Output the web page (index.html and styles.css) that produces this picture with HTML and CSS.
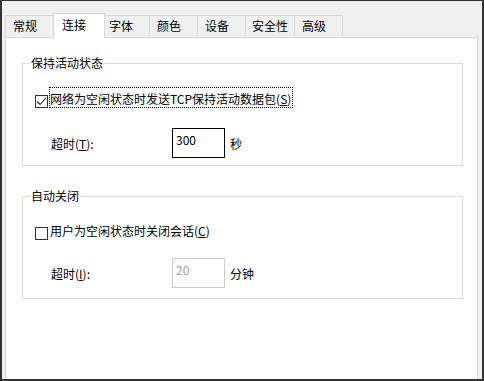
FILE: index.html
```html
<!DOCTYPE html>
<html lang="zh-CN">
<head>
    <meta charset="UTF-8">
    <meta name="viewport" content="width=device-width, initial-scale=1.0">
    <title>连接</title>
    <link rel="stylesheet" href="styles.css">
</head>
<body>
    <div class="window">
        <!-- Tab strip -->
        <div class="tabs">
            <div class="tab">常规</div>
            <div class="tab active">连接</div>
            <div class="tab">字体</div>
            <div class="tab">颜色</div>
            <div class="tab">设备</div>
            <div class="tab wide">安全性</div>
            <div class="tab">高级</div>
        </div>

        <div class="panel">
            <!-- Keep-alive group -->
            <fieldset class="group">
                <legend>保持活动状态</legend>
                <div class="group-body keepalive">
                    <div class="check-row">
                        <span class="checkbox">
                            <svg width="11" height="11" viewBox="0 0 11 11"><polyline points="1,5.5 4,8.5 10,2" fill="none" stroke="#222" stroke-width="1.1"/></svg>
                        </span>
                        <span class="check-label focused">网络为空闲状态时发送TCP保持活动数据包(<u>S</u>)</span>
                    </div>
                    <div class="field-row">
                        <span class="field-label">超时(<u>T</u>):</span>
                        <div class="edit">300</div>
                        <span class="unit">秒</span>
                    </div>
                </div>
            </fieldset>

            <!-- Auto close group -->
            <fieldset class="group second">
                <legend>自动关闭</legend>
                <div class="group-body autoclose">
                    <div class="check-row">
                        <span class="checkbox"></span>
                        <span class="check-label">用户为空闲状态时关闭会话(<u>C</u>)</span>
                    </div>
                    <div class="field-row">
                        <span class="field-label">超时(<u>I</u>):</span>
                        <div class="edit disabled">20</div>
                        <span class="unit">分钟</span>
                    </div>
                </div>
            </fieldset>
        </div>
    </div>
</body>
</html>
```

FILE: styles.css
```css
body {
    margin: 0;
    font-family: "Noto Sans CJK SC", "Noto Sans", sans-serif;
    font-size: 12px;
    color: #000;
    background: #f0f0f0;
}
.window {
    width: 484px;
    height: 381px;
    box-sizing: border-box;
    border: 2px solid #333;
    border-top-width: 1px;
    background: #f0f0f0;
    padding: 12px 4px 0 3px;
    display: flex;
    flex-direction: column;
}
.tabs {
    display: flex;
    align-items: flex-end;
    height: 24px;
}
.tab {
    box-sizing: border-box;
    width: 49px;
    height: 22px;
    line-height: 20px;
    padding-left: 7px;
    margin-right: -1px;
    border: 1px solid #d9d9d9;
    border-bottom: none;
    background: #f0f0f0;
}
.tab.wide {
    width: 50px;
    padding-left: 6px;
}
.tab.active {
    position: relative;
    z-index: 1;
    width: 52px;
    height: 25px;
    margin-bottom: -1px;
    margin-right: -4px;
    padding-left: 8px;
    line-height: 21px;
    background: #fff;
}
.panel {
    flex: 1;
    background: #fff;
    border: 1px solid #d9d9d9;
    border-bottom: none;
}
.group {
    box-sizing: border-box;
    width: 441px;
    margin: 17px 0 0 16px;
    padding: 0;
    min-width: 0;
    border: 1px solid #dcdcdc;
}
.group.second {
    margin-top: 22px;
}
.group legend {
    margin-left: 7px;
    padding: 0 1px;
    line-height: 16px;
}
.group-body {
    padding: 16px 0 7px 12px;
}
.group-body.autoclose {
    padding-top: 15px;
    padding-bottom: 10px;
}
.check-row {
    display: flex;
    align-items: flex-end;
}
.checkbox {
    box-sizing: border-box;
    width: 13px;
    height: 13px;
    border: 1px solid #333;
    background: #fff;
    display: flex;
    align-items: center;
    justify-content: center;
}
.check-label {
    margin-left: 1px;
    padding: 3px 1px 0 0;
    line-height: 16px;
    border: 1px dotted transparent;
}
.check-label.focused {
    border-color: #000;
}
.field-row {
    display: flex;
    align-items: center;
    margin-top: 20px;
    padding-left: 16px;
}
.autoclose .field-row {
    margin-top: 18px;
}
.field-label {
    width: 121px;
}
.edit {
    box-sizing: border-box;
    width: 53px;
    height: 30px;
    padding: 3px 0 0 3px;
    line-height: 16px;
    border: 1px solid #000;
    background: #fff;
}
.edit.disabled {
    border-color: #ccc;
    color: #a0a0a0;
}
.unit {
    margin-left: 5px;
}
```
